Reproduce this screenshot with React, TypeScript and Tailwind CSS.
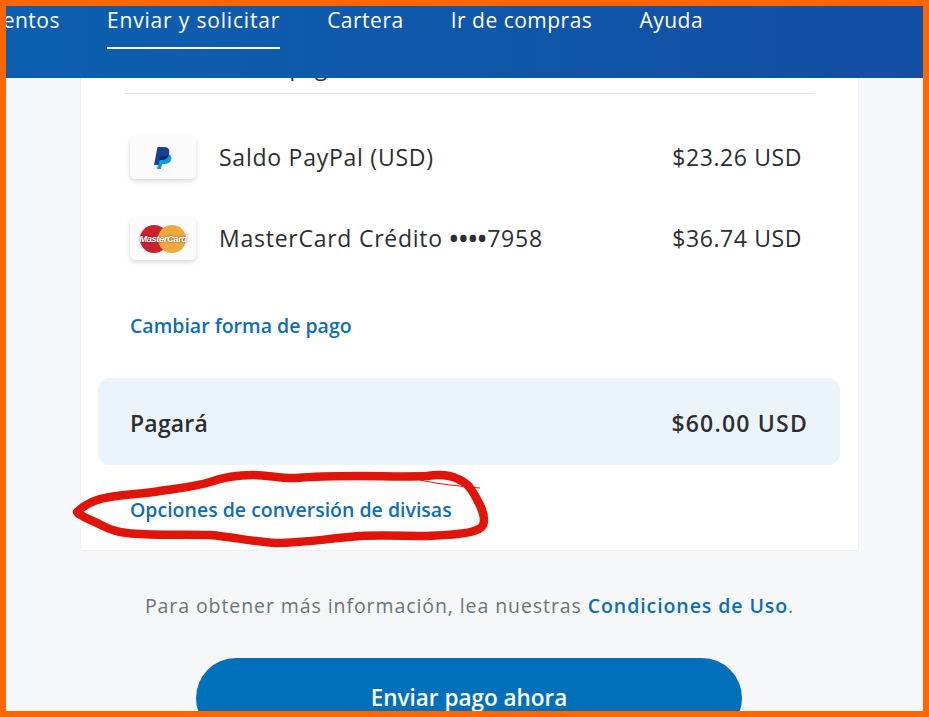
const fontFamily = 'font-["Open_Sans","Liberation_Sans",sans-serif]';

function PayPalMark() {
  return (
    <svg width="22" height="24" viewBox="0 0 22 24">
      <path d="M5 23 L8 8 H14 C19 8 20 11 19 14 C18 17 15 18 12 18 H10 L9 23 Z" fill="#0a9bdc" />
      <path d="M2 19 L5.5 1 H12 C17 1 18 4 17 8 C16 12 13 14 9.5 14 H7.5 L6.5 19 Z" fill="#1a3f94" />
      <path d="M6.5 19 L8 10.5 H11 C14 10.5 16 9.5 17 7.5 C17 11.5 13.5 14 9.5 14 H7.5 L6.5 19 Z" fill="#12266e" />
    </svg>
  );
}

function MasterCardMark() {
  return (
    <div className="relative flex w-[46px] h-[28px]">
      <div className="w-[28px] h-[28px] rounded-full bg-[#cc2030]" />
      <div className="w-[28px] h-[28px] rounded-full bg-[#eea93c] -ml-[10px]" />
      <span className="absolute inset-0 flex items-center justify-center text-[9.5px] font-bold tracking-[-0.5px] text-white [text-shadow:0_0_2px_rgba(90,30,30,0.8)] font-['Liberation_Sans',sans-serif] italic">
        MasterCard
      </span>
    </div>
  );
}

function PaymentRow({ icon, label, amount }: { icon: React.ReactNode; label: React.ReactNode; amount: string }) {
  return (
    <div className="flex items-center h-[44px]">
      <div className="w-[66px] h-[42px] rounded-[5px] bg-[#fbfbfc] shadow-[0_2px_5px_rgba(0,0,0,0.16)] flex items-center justify-center">
        {icon}
      </div>
      <span className="ml-[23px] pb-[2px] text-[23px] tracking-[0.75px] text-[#2c2e2f]">{label}</span>
      <span className="ml-auto mr-[6px] pb-[2px] text-[23px] tracking-[0.6px] text-[#2c2e2f]">{amount}</span>
    </div>
  );
}

function Scribble() {
  return (
    <svg className="absolute left-[60px] top-[460px]" width="430" height="90" viewBox="0 0 430 90" fill="none">
      <path
        d="M11 46 C20 37 30 33 44 31 C62 28 78 28 94 25 C112 22 128 21 144 16 C158 11 172 9 187 9 C202 9 216 13 231 12 C252 10 272 10 294 10 C316 10 340 11 361 10 C374 8 384 9 392 13 C401 17 404 21 408 28 C413 37 418 45 418 54 C418 61 414 63 408 65 C396 69 378 69 361 70 C338 70 316 69 294 70 C266 72 238 77 211 77 C188 76 168 71 144 69 C116 68 86 70 61 67 C52 66 45 64 37 60 C30 56 24 54 18 51 C15 49 12 48 11 46 Z"
        stroke="#e01408"
        strokeWidth="8.5"
        strokeLinejoin="round"
      />
      <path d="M354 14 C372 18 392 20 414 22" stroke="#e01408" strokeWidth="1" />
    </svg>
  );
}

export default function App() {
  return (
    <div className={`relative w-[929px] h-[717px] border-[6px] border-[#ff6600] bg-[#f5f7f9] overflow-hidden flex flex-col items-stretch ${fontFamily}`}>
      <header className="relative z-10 h-[72px] shrink-0 bg-gradient-to-r from-[#0c5fb0] to-[#114fa3] overflow-hidden">
        <nav className="flex gap-[47px] -ml-[80px] text-white text-[21px] tracking-[0.5px] leading-[28px]">
          <span className="w-[134px] text-right">Movimientos</span>
          <span className="h-[43px] border-b-2 border-white tracking-[0.82px]">Enviar y solicitar</span>
          <span>Cartera</span>
          <span>Ir de compras</span>
          <span>Ayuda</span>
        </nav>
      </header>

      <main className="ml-[74px] w-[779px] h-[473px] shrink-0 bg-white border border-t-0 border-[#eef0f3] pl-[17px] pr-[18px]">
        <div className="mx-[26px] h-[16px] border-b border-[#e3e5e8] relative overflow-hidden">
          <span className="absolute left-[62px] -top-[27px] text-[22px] text-[#2c2e2f]">Forma de pago</span>
        </div>
        <div className="mx-[32px] mt-[42px] flex flex-col gap-[37px]">
          <PaymentRow icon={<PayPalMark />} label="Saldo PayPal (USD)" amount="$23.26 USD" />
          <PaymentRow
            icon={<MasterCardMark />}
            label={<>MasterCard Crédito <span className="font-bold">••••</span>7958</>}
            amount="$36.74 USD"
          />
        </div>
        <a className="block ml-[32px] mt-[51px] text-[19.5px] font-semibold text-[#0f6cb8] leading-[28px]">Cambiar forma de pago</a>
        <div className="mt-[38px] h-[87px] rounded-[12px] bg-[#ecf4fb] flex items-center justify-between pl-[32px] pr-[32px] pt-[3px] text-[23px] font-semibold text-[#2c2e2f]">
          <span className="tracking-[0.2px]">Pagará</span>
          <span className="tracking-[1.2px]">$60.00 USD</span>
        </div>
        <a className="block ml-[32px] mt-[31px] text-[19.5px] font-semibold text-[#0f6cb8] leading-[28px]">Opciones de conversión de divisas</a>
      </main>

      <p className="mt-[41px] pl-[10px] text-center text-[19.5px] tracking-[0.92px] text-[#6c7378] leading-[28px]">
        Para obtener más información, lea nuestras <span className="font-semibold text-[#0f6cb8]">Condiciones de Uso</span>.
      </p>

      <button className="mt-[38px] ml-[190px] w-[546px] h-[80px] shrink-0 rounded-full bg-[#0070ba] text-white text-[22.5px] font-semibold pb-[1px]">
        Enviar pago ahora
      </button>

      <Scribble />
    </div>
  );
}
